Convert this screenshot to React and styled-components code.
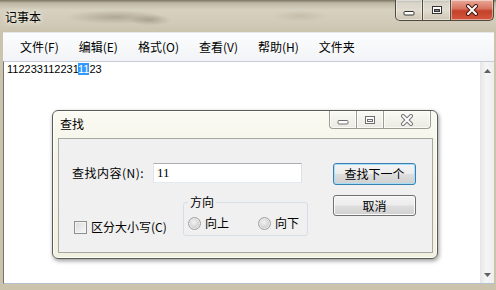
import React from 'react';
import styled, { createGlobalStyle } from 'styled-components';

const CJK = '"Noto Sans CJK SC", "Noto Sans", sans-serif';

const GlobalStyle = createGlobalStyle`
  html, body {
    margin: 0;
    padding: 0;
    overflow: hidden;
    background: #cbc3ab;
  }
  body {
    font-family: ${CJK};
    font-size: 12px;
    color: #000;
  }
  * {
    box-sizing: border-box;
  }
`;

const Desktop = styled.div`
  position: relative;
  width: 496px;
  height: 290px;
  overflow: hidden;
`;

// notepad window frame (aero basic, blurred wallpaper behind)
const Window = styled.div`
  display: flex;
  flex-direction: column;
  height: 100%;
  padding: 0 2px 6px 3px;
  background:
    radial-gradient(ellipse 70px 10px at 115px 17px, rgba(110, 100, 80, 0.35), transparent 70%),
    radial-gradient(ellipse 30px 8px at 150px 20px, rgba(90, 80, 60, 0.3), transparent 70%),
    radial-gradient(ellipse 40px 8px at 300px 16px, rgba(150, 140, 115, 0.25), transparent 70%),
    linear-gradient(180deg, #7c7562 0px, #bdb6a2 3px, #d7d1c1 10px, #d1cab7 24px, #cbc3ad 32px, #cbc3ab 100%);
`;

const TitleBar = styled.div`
  display: flex;
  align-items: flex-start;
  height: 32px;
`;

const Title = styled.span`
  padding: 9px 0 0 2px;
  line-height: 16px;
  text-shadow: 0 0 6px #f4f1e8, 0 0 3px #f4f1e8;
`;

const CaptionGroup = styled.div`
  display: flex;
  margin-left: auto;
  margin-right: ${(p) => p.$right || 0}px;
`;

const CaptionButton = styled.div`
  width: ${(p) => p.$w}px;
  height: 21px;
  display: flex;
  align-items: center;
  justify-content: center;
  border: 1px solid #4f4a3e;
  border-top: none;
  border-left-width: ${(p) => (p.$first ? 1 : 0)}px;
  border-radius: ${(p) => (p.$first ? '0 0 0 5px' : p.$last ? '0 0 5px 0' : '0')};
  background: ${(p) =>
    p.$close
      ? 'linear-gradient(180deg, #e9a898 0%, #d87663 42%, #c4412a 55%, #d3573d 100%)'
      : 'linear-gradient(180deg, rgba(255,255,255,0.5) 0%, rgba(255,255,255,0.25) 50%, rgba(190,180,160,0.25) 100%)'};
  box-shadow: inset 0 0 0 1px rgba(255, 255, 255, 0.45);
`;

const MenuBar = styled.div`
  display: flex;
  align-items: center;
  height: 29px;
  padding-left: 7px;
  background: linear-gradient(180deg, #fbfcfd, #f2f4f7);
  border-top: 1px solid #e4e7ec;
`;

const MenuItem = styled.span`
  padding: 0 10px;
  line-height: 16px;
`;

const Editor = styled.div`
  flex: 1;
  display: flex;
  background: #fff;
  border-top: 1px solid #c4ccd6;
  border-left: 1px solid #6f756c;
  border-bottom: 1px solid #b4c3d2;
`;

const TextArea = styled.div`
  flex: 1;
  padding: 1px 0 0 3px;
  font-family: "Liberation Sans", Arial, sans-serif;
  font-size: 11px;
  line-height: 13px;
  white-space: pre;
`;

const Selected = styled.span`
  background: #3399ff;
  color: #fff;
`;

const ScrollBar = styled.div`
  width: 14px;
  display: flex;
  flex-direction: column;
  justify-content: space-between;
  background: linear-gradient(90deg, #e9e9e9, #f5f5f5 40%, #eeeeee);
  border-left: 1px solid #e6e6e6;
`;

const ScrollArrow = styled.div`
  height: 17px;
  display: flex;
  align-items: center;
  justify-content: center;
`;

// find dialog floats over the notepad window
const Dialog = styled.div`
  position: absolute;
  left: 52px;
  top: 110px;
  width: 386px;
  height: 149px;
  display: flex;
  flex-direction: column;
  padding: 0 4px 5px 5px;
  border: 1px solid #5b5b55;
  border-radius: 6px;
  background: linear-gradient(180deg, #fbfaf3 0%, #f5f4e7 30%, #f1f0e0 100%);
  box-shadow: 1px 2px 4px rgba(0, 0, 0, 0.4), inset 0 0 0 1px rgba(255, 255, 255, 0.8);
`;

const DialogTitleBar = styled.div`
  display: flex;
  align-items: flex-start;
  height: 27px;
`;

const DialogTitle = styled.span`
  padding: 5px 0 0 2px;
  line-height: 16px;
`;

const DlgCapButton = styled.div`
  width: ${(p) => p.$w}px;
  height: 18px;
  display: flex;
  align-items: center;
  justify-content: center;
  border: 1px solid #9d9c94;
  border-top: none;
  border-left-width: ${(p) => (p.$first ? 1 : 0)}px;
  border-radius: ${(p) => (p.$first ? '0 0 0 4px' : p.$last ? '0 0 4px 0' : '0')};
  background: linear-gradient(180deg, #fafaf6, #ebeae2);
  box-shadow: inset 0 0 0 1px rgba(255, 255, 255, 0.7);
`;

const ClientArea = styled.div`
  flex: 1;
  display: flex;
  padding: 24px 0 0 13px;
  background: #f0f0f0;
  border: 1px solid #a8a8a2;
`;

const LeftCol = styled.div`
  display: flex;
  flex-direction: column;
`;

const FindRow = styled.div`
  display: flex;
  align-items: center;
  height: 20px;
`;

const FieldLabel = styled.span`
  width: 81px;
  line-height: 16px;
  letter-spacing: 0.5px;
`;

const TextBox = styled.div`
  width: 149px;
  height: 20px;
  padding: 0 3px;
  border: 1px solid;
  border-color: #abadb3 #dbdfe6 #e3e9ef #e2e3ea;
  background: #fff;
  font-family: "Liberation Serif", serif;
  font-size: 13px;
  line-height: 18px;
`;

const OptionRow = styled.div`
  display: flex;
  align-items: flex-end;
  margin-top: 12px;
  padding-left: 2px;
`;

const CheckItem = styled.label`
  width: 109px;
  display: flex;
  align-items: center;
  gap: 4px;
  margin-bottom: 1px;
  line-height: 16px;
`;

const CheckBox = styled.span`
  width: 13px;
  height: 13px;
  border: 1px solid #8e8f8f;
  background: linear-gradient(135deg, #dcdcdc, #f7f7f7);
  box-shadow: inset 0 0 0 1px #f4f4f4;
`;

const GroupBox = styled.fieldset`
  width: 125px;
  min-width: 0;
  margin: 0;
  padding: 0 0 5px 4px;
  border: 1px solid #d5dfe5;
  border-radius: 3px;
`;

const Legend = styled.legend`
  padding: 0 2px;
  line-height: 14px;
`;

const RadioRow = styled.div`
  display: flex;
  gap: 29px;
  padding-top: 7px;
`;

const RadioItem = styled.label`
  display: flex;
  align-items: center;
  gap: 4px;
  line-height: 14px;
`;

const Radio = styled.span`
  width: 13px;
  height: 13px;
  border-radius: 50%;
  border: 1px solid #a2a2a2;
  background: radial-gradient(circle at 45% 40%, #f4f4f4 0%, #d9d9d9 45%, #bdbdbd 100%);
  box-shadow: inset 0 0 0 1px #e9e9e9;
`;

const ButtonCol = styled.div`
  display: flex;
  flex-direction: column;
  gap: 10px;
  margin-left: 25px;
`;

const Button = styled.div`
  width: 83px;
  height: ${(p) => (p.$default ? 22 : 21)}px;
  display: flex;
  align-items: center;
  justify-content: center;
  border: 1px solid ${(p) => (p.$default ? '#3c7fb1' : '#707070')};
  border-radius: 3px;
  background: linear-gradient(180deg, #f4f4f4 0%, #ececec 48%, #dedede 52%, #d0d0d0 100%);
  box-shadow: inset 0 0 0 1px ${(p) => (p.$default ? '#a6def8' : '#fbfbfb')};
  line-height: 16px;
`;

const MinGlyph = ({ dark }) => (
  <svg width="12" height="7" viewBox="0 0 12 7" style={{ marginTop: dark ? 7 : 5 }}>
    <rect x="1" y="1.5" width="10" height="3.5" rx="1" fill="#fff" stroke={dark ? '#333' : '#6e6e6e'} />
  </svg>
);

const MaxGlyph = ({ dark }) => (
  <svg width="12" height="10" viewBox="0 0 12 10">
    <rect x="1.5" y="1.5" width="9" height="7" fill="#fff" stroke={dark ? '#333' : '#6e6e6e'} />
    <rect x="3.5" y="4.5" width="5" height="2" fill={dark ? '#8a8478' : '#f4f4f0'} stroke={dark ? '#333' : '#6e6e6e'} />
  </svg>
);

const CloseGlyph = ({ dark }) => (
  <svg width="14" height="12" viewBox="0 0 14 12">
    <path d="M3 2 L11 10 M11 2 L3 10" stroke={dark ? '#4a1a10' : '#777'} strokeWidth="4" strokeLinecap="round" />
    <path d="M3 2 L11 10 M11 2 L3 10" stroke="#fff" strokeWidth="2" strokeLinecap="round" />
  </svg>
);

const Arrow = ({ up }) => (
  <svg width="7" height="4" viewBox="0 0 7 4">
    <path d={up ? 'M0 4 L3.5 0 L7 4 Z' : 'M0 0 L3.5 4 L7 0 Z'} fill="#606060" />
  </svg>
);

const menus = ['文件(F)', '编辑(E)', '格式(O)', '查看(V)', '帮助(H)', '文件夹'];

export default function App() {
  return (
    <>
      <GlobalStyle />
      <Desktop>
        <Window>
          <TitleBar>
            <Title>记事本</Title>
            <CaptionGroup>
              <CaptionButton $w={28} $first>
                <MinGlyph dark />
              </CaptionButton>
              <CaptionButton $w={28}>
                <MaxGlyph dark />
              </CaptionButton>
              <CaptionButton $w={43} $last $close>
                <CloseGlyph dark />
              </CaptionButton>
            </CaptionGroup>
          </TitleBar>
          <MenuBar>
            {menus.map((m) => (
              <MenuItem key={m}>{m}</MenuItem>
            ))}
          </MenuBar>
          <Editor>
            <TextArea>
              112233112231<Selected>11</Selected>23
            </TextArea>
            <ScrollBar>
              <ScrollArrow>
                <Arrow up />
              </ScrollArrow>
              <ScrollArrow>
                <Arrow />
              </ScrollArrow>
            </ScrollBar>
          </Editor>
        </Window>

        <Dialog>
          <DialogTitleBar>
            <DialogTitle>查找</DialogTitle>
            <CaptionGroup $right={2}>
              <DlgCapButton $w={28} $first>
                <MinGlyph />
              </DlgCapButton>
              <DlgCapButton $w={27}>
                <MaxGlyph />
              </DlgCapButton>
              <DlgCapButton $w={47} $last>
                <CloseGlyph />
              </DlgCapButton>
            </CaptionGroup>
          </DialogTitleBar>
          <ClientArea>
            <LeftCol>
              <FindRow>
                <FieldLabel>查找内容(N):</FieldLabel>
                <TextBox>11</TextBox>
              </FindRow>
              <OptionRow>
                <CheckItem>
                  <CheckBox />
                  区分大小写(C)
                </CheckItem>
                <GroupBox>
                  <Legend>方向</Legend>
                  <RadioRow>
                    <RadioItem>
                      <Radio />
                      向上
                    </RadioItem>
                    <RadioItem>
                      <Radio />
                      向下
                    </RadioItem>
                  </RadioRow>
                </GroupBox>
              </OptionRow>
            </LeftCol>
            <ButtonCol>
              <Button $default>查找下一个</Button>
              <Button>取消</Button>
            </ButtonCol>
          </ClientArea>
        </Dialog>
      </Desktop>
    </>
  );
}
